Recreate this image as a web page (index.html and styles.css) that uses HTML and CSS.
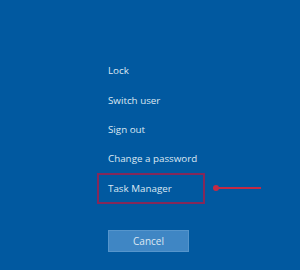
FILE: index.html
```html
<!DOCTYPE html>
<html lang="en">
<head>
    <meta charset="UTF-8">
    <meta name="viewport" content="width=device-width, initial-scale=1.0">
    <title>Security Options</title>
    <link rel="stylesheet" href="styles.css">
</head>
<body>
    <div class="screen">
        <ul class="options">
            <li class="option">Lock</li>
            <li class="option">Switch user</li>
            <li class="option">Sign out</li>
            <li class="option">Change a password</li>
            <li class="option option-marked">
                <span class="highlight">Task Manager</span>
                <span class="pointer"></span>
            </li>
        </ul>
        <button type="button" class="cancel">Cancel</button>
    </div>
</body>
</html>
```

FILE: styles.css
```css
:root {
    --background: #0159a0;
    --text: #dce8f3;
    --button: #3f86c4;
    --button-border: #5595cc;
    --marker: #84285a;
    --arrow: #c42a45;
}

body {
    margin: 0;
    background: var(--background);
    font-family: "Open Sans", "Noto Sans", sans-serif;
    color: var(--text);
    width: 300px;
    height: 270px;
    overflow: hidden;
}

.screen {
    padding: 56px 0 0 108px;
}

.options {
    list-style: none;
    margin: 0;
    padding: 0;
}

.option {
    height: 29.4px;
    display: flex;
    align-items: center;
    font-size: 9.8px;
    white-space: nowrap;
}

.option-marked {
    margin-left: -11px;
}

.highlight {
    box-sizing: border-box;
    height: 31px;
    width: 108px;
    padding-left: 9px;
    border: 2px solid var(--marker);
    display: flex;
    align-items: center;
}

.pointer {
    position: relative;
    margin-left: 8px;
    width: 48px;
    height: 2px;
    background: var(--arrow);
}

.pointer::before {
    content: "";
    position: absolute;
    left: 0;
    top: -2px;
    width: 6px;
    height: 6px;
    border-radius: 50%;
    background: var(--arrow);
}

.cancel {
    margin-top: 26.7px;
    width: 81px;
    height: 22px;
    background: var(--button);
    border: 1px solid var(--button-border);
    color: var(--text);
    font-family: inherit;
    font-size: 10px;
    padding: 0;
}
```
